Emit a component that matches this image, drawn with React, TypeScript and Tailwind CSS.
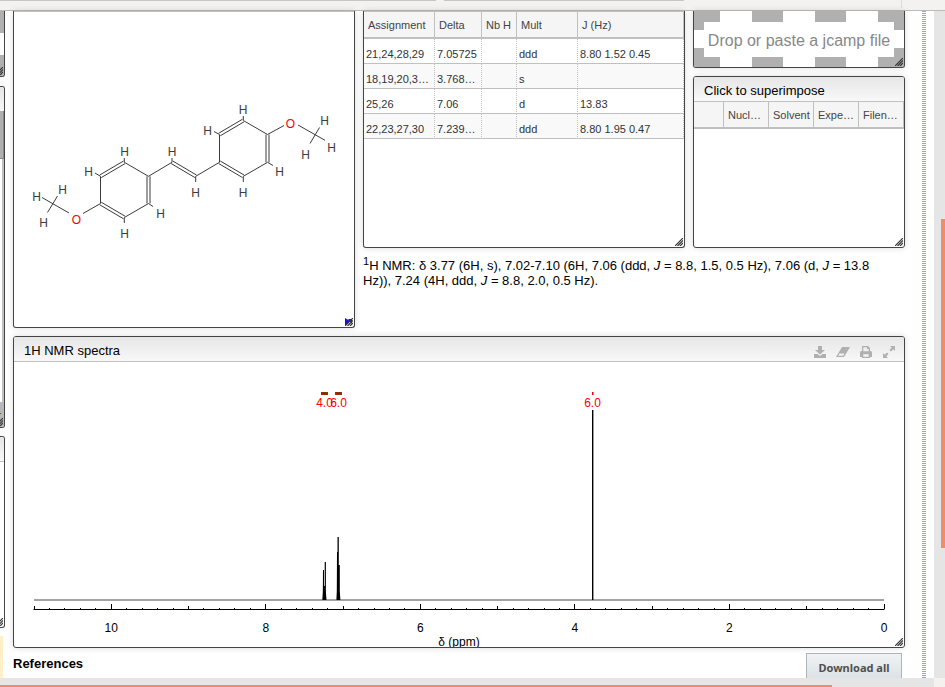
import type { ReactNode } from "react";

type Point = [number, number];

const PANEL = "relative overflow-hidden border-[#444] bg-white shadow-[0_0_6px_rgba(0,0,0,0.15)]";
const TITLE = "flex h-[25px] shrink-0 items-center justify-between border-b border-[#c0c0c0] bg-linear-to-b from-[#e6e6e6] to-[#f8f8f8] pt-[3px] pr-2 pl-[10px] text-[13px]";
const HEAD_CELL = "border-r border-[#c0c0c0] px-[4px] text-left font-normal whitespace-nowrap";
const CELL = "border-r border-b border-[#c0c0c0] [border-right-style:dotted] pt-[5px] pl-[2px] whitespace-nowrap";

function ResizeGrip({ blue = false }: { blue?: boolean }) {
  return (
    <svg className="absolute right-px bottom-px" width="8" height="8" viewBox="0 0 8 8" aria-hidden="true">
      {blue && <path d="M0 0l5 3-5 5z M3 1h4v5z" fill="#1414d8" />}
      <path d="M0 8L8 0M2.500 8L8 2.500M5 8L8 5" stroke="#333" strokeWidth="1.200" />
    </svg>
  );
}

const singleBonds: [Point, Point][] = [
  [[243.3, 120.5], [267.5, 134.5]],
  [[267.5, 162.3], [243.3, 176.3]],
  [[219.5, 162.3], [219.5, 134.5]],
  [[124.3, 162.3], [148.5, 176.3]],
  [[148.5, 203.5], [124.3, 217.5]],
  [[100.5, 203.5], [100.5, 176.3]],
  [[148.5, 176.3], [172, 162.3]],
  [[195.7, 176.3], [219.5, 162.3]],
  [[267.5, 134.5], [284, 125.5]],
  [[298, 125], [325, 140.3]],
  [[319.5, 127.5], [310, 143.5]],
  [[100.5, 203.5], [83, 213.5]],
  [[69, 213], [42, 197.5]],
  [[57.5, 196], [47.5, 212.5]],
  [[243.3, 120.5], [243.3, 116]],
  [[219.5, 134.5], [214, 131.5]],
  [[267.5, 162.3], [273, 165.5]],
  [[243.3, 176.3], [243.3, 182]],
  [[172, 162.3], [172, 158]],
  [[195.7, 176.3], [195.7, 182]],
  [[124.3, 162.3], [124.3, 158]],
  [[100.5, 176.3], [95, 173]],
  [[148.5, 203.5], [153, 206.5]],
  [[124.3, 217.5], [124.3, 223]],
];

const doubleBonds: [Point, Point][] = [
  [[219.5, 134.5], [243.3, 120.5]],
  [[267.5, 134.5], [267.5, 162.3]],
  [[219.5, 162.3], [243.3, 176.3]],
  [[100.5, 176.3], [124.3, 162.3]],
  [[148.5, 176.3], [148.5, 203.5]],
  [[100.5, 203.5], [124.3, 217.5]],
  [[172, 162.3], [195.7, 176.3]],
];

const hydrogens: Point[] = [
  [243, 110], [207.5, 131], [324.5, 121], [331.5, 148], [305.5, 155], [279.5, 172],
  [243, 193], [172, 152], [195.5, 193], [124.5, 152], [88.5, 172], [160.5, 214],
  [124.5, 234], [62.5, 190], [36.5, 197], [43.5, 223],
];

function Molecule() {
  return (
    <svg className="block h-[316px] w-full font-['Liberation_Sans',sans-serif]" viewBox="14 11 340 316" role="img" aria-label="Molecule">
      <g stroke="#3c3c3c" strokeWidth="1">
        {singleBonds.map(([a, b], i) => (
          <line key={i} x1={a[0]} y1={a[1]} x2={b[0]} y2={b[1]} />
        ))}
        {doubleBonds.map(([a, b], i) => {
          const length = Math.hypot(b[0] - a[0], b[1] - a[1]);
          const nx = (-(b[1] - a[1]) / length) * 1.5;
          const ny = ((b[0] - a[0]) / length) * 1.5;
          return (
            <g key={i}>
              <line x1={a[0] + nx} y1={a[1] + ny} x2={b[0] + nx} y2={b[1] + ny} />
              <line x1={a[0] - nx} y1={a[1] - ny} x2={b[0] - nx} y2={b[1] - ny} />
            </g>
          );
        })}
      </g>
      <g fontSize="12" textAnchor="middle" fill="#3c3c3c">
        {hydrogens.map(([x, y]) => (
          <text key={`${x}-${y}`} x={x} y={y + 4}>H</text>
        ))}
        <g fill="#f00">
          <text x="290.5" y="128">O</text>
          <text x="76.5" y="224">O</text>
        </g>
      </g>
    </svg>
  );
}

const rows = [
  ["21,24,28,29", "7.05725", "", "ddd", "8.80 1.52 0.45"],
  ["18,19,20,3…", "3.768…", "", "s", ""],
  ["25,26", "7.06", "", "d", "13.83"],
  ["22,23,27,30", "7.239…", "", "ddd", "8.80 1.95 0.47"],
];

function AssignmentTable() {
  return (
    <table className="w-full table-fixed border-separate border-spacing-0 text-[11px] leading-[14px] text-[#333]">
      <colgroup>
        <col className="w-[71px]" />
        <col className="w-[47px]" />
        <col className="w-[35px]" />
        <col className="w-[61px]" />
        <col />
      </colgroup>
      <thead>
        <tr className="h-[27px] bg-[#f5f5f5] text-[#444]">
          {["Assignment", "Delta", "Nb H", "Mult", "J (Hz)"].map((h) => (
            <th key={h} className={`${HEAD_CELL} border-b-2`}>{h}</th>
          ))}
        </tr>
      </thead>
      <tbody>
        {rows.map((row) => (
          <tr key={row[0]} className="h-[25px] even:bg-[#f9f9f9]">
            {row.map((value, i) => (
              <td key={i} className={CELL}>{value}</td>
            ))}
          </tr>
        ))}
      </tbody>
    </table>
  );
}

const MAX_PPM = 11;
const ppmToX = (ppm: number) => 884 - (ppm * 850) / MAX_PPM;

// Each tick is 0.2 ppm apart; odd ppm values get a medium tick, even ones a long tick.
function tickTop(i: number) {
  if (i % 10 === 0) return 604;
  return i % 5 === 0 ? 606 : 608;
}

function Spectrum() {
  const ticks = Array.from({ length: 56 }, (_, i) => i);
  return (
    <svg className="block h-[285px] w-full font-['Liberation_Sans',sans-serif]" viewBox="14 362 890 285" role="img" aria-label="1H NMR spectrum">
      <path d="M34 600H884" stroke="#858585" strokeWidth="1.400" />
      <path d="M33.500 609.500H884.500" stroke="#000" />
      <g stroke="#000">
        {ticks.map((i) => {
          const x = Math.floor(ppmToX(i / 5)) + 0.5;
          return <line key={i} x1={x} x2={x} y1={tickTop(i)} y2="609" />;
        })}
      </g>
      <g fill="#000">
        <path d="M323 570h1v16h0.700v-24h1.200v30l0.600 8h-4.200l0.500-8z" />
        <path d="M337 552h0.500v-15h1.300v28h1v26l0.600 9h-4l0.400-9z" />
        <path d="M592 410h1.400v190h-1.400z" />
      </g>
      <g fill="#f00">
        <rect x="321" y="392" width="7" height="3" />
        <rect x="335" y="392" width="7" height="3" />
        <rect x="592" y="392" width="1.500" height="3" />
      </g>
      <g fill="#206000">
        <rect x="322" y="392.500" width="5" height="2" />
        <rect x="336" y="392.500" width="5" height="2" />
      </g>
      <g fontSize="12" textAnchor="middle">
        <g fill="#f00">
          <text x="324.5" y="407">4.0</text>
          <text x="338.5" y="407">6.0</text>
          <text x="592.5" y="407">6.0</text>
        </g>
        {[10, 8, 6, 4, 2, 0].map((ppm) => (
          <text key={ppm} x={ppmToX(ppm)} y="632">{ppm}</text>
        ))}
        <text x="459" y="646">δ (ppm)</text>
      </g>
    </svg>
  );
}

function ToolButton({ label, children }: { label: string; children: ReactNode }) {
  return (
    <button type="button" aria-label={label}>
      <svg width="14" height="14" viewBox="0 0 14 14" fill="#b0b0b0">{children}</svg>
    </button>
  );
}

function SidePanel({ className, children }: { className: string; children?: ReactNode }) {
  return (
    <div className={`${PANEL} shrink-0 border-r border-b ${className}`}>
      {children}
      <ResizeGrip />
    </div>
  );
}

export default function App() {
  return (
    <div className="flex h-screen flex-col overflow-hidden bg-white font-['Liberation_Sans',Arial,sans-serif] text-black">
      <header className="flex h-[11px] shrink-0 items-start border-b border-[#bcbbb9] bg-[#f4f2f0]">
        <div className="h-px flex-[436] bg-[#c8c6c4]" />
        <div className="ml-2 h-px flex-[240] bg-[#c8c6c4]" />
        <div className="ml-[217px] h-2 w-px bg-[#dddbd9]" />
        <div className="w-[43px]" />
      </header>

      <div className="flex min-h-0 flex-1">
        <aside className="flex w-[5px] shrink-0 flex-col overflow-hidden">
          <SidePanel className="h-[66px] rounded-br-[3px]">
            <div className="h-[22px] bg-[#b0b0b0]" />
            <div className="h-[22px]" />
            <div className="h-[22px] bg-[#b0b0b0]" />
          </SidePanel>
          <SidePanel className="mt-[9px] h-[342px] rounded-r-[3px] border-t">
            <div className="h-6 bg-linear-to-b from-[#e6e6e6] to-[#f8f8f8]" />
            <div className="h-12 border-r border-b border-[#888] bg-[#b0b0b0]" />
            <div className="h-[243px] border-r-2 border-[#c0c0c0]" />
            <div className="h-[27px] bg-[#b8b8b8] pt-[11px]">
              <div className="h-px w-px bg-[#4444ff]" />
            </div>
          </SidePanel>
          <SidePanel className="mt-2 h-[192px] rounded-r-[3px] border-t">
            <div className="h-[25px] border-b border-[#c0c0c0] bg-linear-to-b from-[#e6e6e6] to-[#f8f8f8]" />
          </SidePanel>
          <div className="mt-2 h-[43px] w-[3px] bg-[#fff0c8]" />
        </aside>

        <main className="mr-[17px] ml-2 min-w-0 flex-1">
          <div className="grid grid-cols-[342fr_542fr] gap-2">
            <section className={`${PANEL} h-[317px] rounded-b-[3px] border-x border-b`}>
              <div className="absolute inset-x-0 top-0 h-px bg-[#c0c0c0]" />
              <Molecule />
              <ResizeGrip blue />
            </section>

            <div className="min-w-0">
              <div className="grid h-[237px] grid-cols-[322fr_212fr] gap-2">
                <section className={`${PANEL} rounded-b-[3px] border-x border-b`}>
                  <div className="h-px bg-[#c0c0c0]" />
                  <AssignmentTable />
                  <ResizeGrip />
                </section>
                <div className="flex min-w-0 flex-col gap-2">
                  <section className={`${PANEL} h-[57px] rounded-b-[3px] border-x border-b`}>
                    <div className="h-full bg-[linear-gradient(transparent_19px,white_19px,white_37px,transparent_37px),repeating-linear-gradient(90deg,#b0b0b0_0px,#b0b0b0_26px,white_26px,white_58px,#b0b0b0_58px,#b0b0b0_63px)] px-[10px] pt-[11px] pb-[10px]">
                      <div className="flex h-full items-center justify-center bg-white pt-[2px] text-[16px] whitespace-nowrap text-[#888]">
                        Drop or paste a jcamp file
                      </div>
                    </div>
                    <ResizeGrip />
                  </section>
                  <section className={`${PANEL} flex-1 rounded-[3px] border`}>
                    <h2 className={TITLE}>Click to superimpose</h2>
                    <table className="w-full table-fixed border-separate border-spacing-0 text-[11px] leading-[14px]">
                      <colgroup>
                        <col className="w-[30px]" />
                        <col />
                        <col />
                        <col />
                        <col />
                      </colgroup>
                      <thead>
                        <tr className="h-[27px] bg-[#f5f5f5] text-[#444]">
                          {["", "Nucl…", "Solvent", "Expe…", "Filen…"].map((h) => (
                            <th key={h} className={`${HEAD_CELL} border-b-2`}>{h}</th>
                          ))}
                        </tr>
                      </thead>
                    </table>
                    <ResizeGrip />
                  </section>
                </div>
              </div>
              <p className="pt-[10px] pr-5 text-[13px] leading-[15px]">
                <sup className="text-[11px]">1</sup>H NMR: δ 3.77 (6H, s), 7.02-7.10 (6H, 7.06 (ddd, <i>J</i> = 8.8, 1.5, 0.5 Hz), 7.06 (d, <i>J</i> = 13.8 Hz)), 7.24 (4H, ddd, <i>J</i> = 8.8, 2.0, 0.5 Hz).
              </p>
            </div>
          </div>

          <section className={`${PANEL} mt-2 rounded-[3px] border`}>
            <div className={TITLE}>
              <h2>1H NMR spectra</h2>
              <div className="flex items-center gap-[9px] pt-[3px]">
                <ToolButton label="Download">
                  <path d="M5 1h4v4h3L7 9.500 2 5h3z" />
                  <path d="M1 9h3.500L7 11l2.500-2H13v4H1z" />
                </ToolButton>
                <ToolButton label="Clear">
                  <path fillRule="evenodd" d="M6 2h8L8 12H0zM3.500 8.500l-1.300 2.200h5l1.300-2.200z" />
                </ToolButton>
                <ToolButton label="Print">
                  <path fillRule="evenodd" d="M3 1h6l2 2v3h1l1 1v5h-2v1H3v-1H1V7l1-1h1zM4.300 2.300v4h5.400V4H8V2.300zM4.300 9.300v2.400h5.400V9.300z" />
                </ToolButton>
                <ToolButton label="Fullscreen">
                  <path d="M8 1h5v5l-1.700-1.700L9 6.600 7.400 5l2.300-2.300zM1 8l1.700 1.700L5 7.400 6.600 9l-2.300 2.300L6 13H1z" />
                </ToolButton>
              </div>
            </div>
            <Spectrum />
            <ResizeGrip />
          </section>

          <footer className="flex items-start justify-between pt-[5px] pr-[3px]">
            <h2 className="pt-[3px] text-[13px] leading-[15px] font-bold">References</h2>
            <button
              type="button"
              className="h-[30px] w-24 border border-[#aeb4b8] bg-linear-to-b from-[#f0f3f5] to-[#d8dfe3] font-['Noto_Sans',sans-serif] text-[11px] font-bold text-[#505050]"
            >
              Download all
            </button>
          </footer>
        </main>

        <div className="mr-2 w-1 shrink-0 bg-[repeating-linear-gradient(#9ca5c6_0px,#9ca5c6_1px,white_1px,white_2px)]" />
        <div className="flex w-[11px] shrink-0 justify-end bg-[#e5e5e5]">
          <div className="mt-[208px] h-[329px] w-1 bg-[#f08c66]" />
        </div>
      </div>

      <div className="relative z-10 flex h-[9px] shrink-0 items-end bg-[#e5e5e5]">
        <div className="h-[2px] w-[88%] bg-[#f08c66]" />
        <div className="ml-auto h-full w-[11px] bg-[#f4f2f0]" />
      </div>
    </div>
  );
}
